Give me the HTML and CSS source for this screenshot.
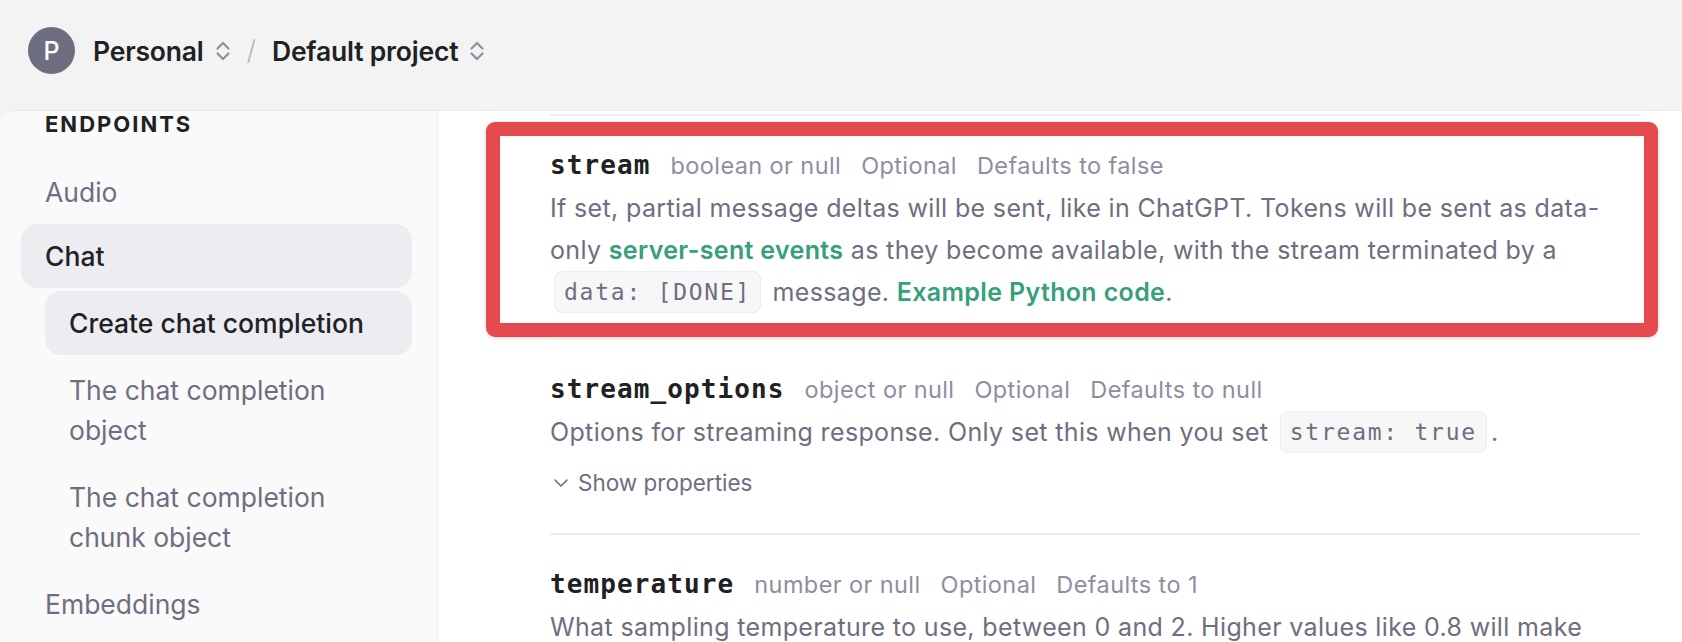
FILE: index.html
```html
<!DOCTYPE html>
<html lang="en">
<head>
<meta charset="utf-8">
<title>API Reference – Chat</title>
<link rel="stylesheet" href="styles.css">
</head>
<body>
<div class="app">
  <header class="topbar">
    <div class="avatar">P</div>
    <span class="crumb">Personal</span>
    <svg class="updown" viewBox="0 0 16 22" aria-hidden="true"><path d="M2.5 8.5 L8 3 L13.5 8.5 M2.5 13.5 L8 19 L13.5 13.5" fill="none" stroke="#8e8ea0" stroke-width="2.2" stroke-linecap="round" stroke-linejoin="round"/></svg>
    <span class="sep">/</span>
    <span class="crumb">Default project</span>
    <svg class="updown" viewBox="0 0 16 22" aria-hidden="true"><path d="M2.5 8.5 L8 3 L13.5 8.5 M2.5 13.5 L8 19 L13.5 13.5" fill="none" stroke="#8e8ea0" stroke-width="2.2" stroke-linecap="round" stroke-linejoin="round"/></svg>
  </header>
  <div class="panel">
    <aside class="sidebar">
      <div class="section-title">ENDPOINTS</div>
      <nav class="nav">
        <a class="nav-item nav-top">Audio</a>
        <a class="nav-item active">Chat</a>
        <div class="subnav">
          <a class="nav-item active">Create chat completion</a>
          <a class="nav-item">The chat completion object</a>
          <a class="nav-item">The chat completion chunk object</a>
        </div>
        <a class="nav-item">Embeddings</a>
      </nav>
    </aside>
    <main class="main">
      <section class="param">
        <div class="param-head">
          <span class="param-name">stream</span>
          <span class="param-meta">boolean or null</span>
          <span class="param-meta">Optional</span>
          <span class="param-meta">Defaults to false</span>
        </div>
        <p class="param-desc">If set, partial message deltas will be sent, like in ChatGPT. Tokens will be sent as data-only <a class="link">server-sent events</a> as they become available, with the stream terminated by a <code class="code">data: [DONE]</code> message. <a class="link">Example Python code</a>.</p>
        <div class="highlight"></div>
      </section>
      <section class="param">
        <div class="param-head">
          <span class="param-name">stream_options</span>
          <span class="param-meta">object or null</span>
          <span class="param-meta">Optional</span>
          <span class="param-meta">Defaults to null</span>
        </div>
        <p class="param-desc">Options for streaming response. Only set this when you set <code class="code">stream: true</code>.</p>
        <div class="show-props">
          <svg class="chev" viewBox="0 0 16 10" aria-hidden="true"><path d="M2 2 L8 8 L14 2" fill="none" stroke="#6e6e80" stroke-width="1.6" stroke-linecap="round" stroke-linejoin="round"/></svg>
          <span>Show properties</span>
        </div>
      </section>
      <section class="param">
        <div class="param-head">
          <span class="param-name">temperature</span>
          <span class="param-meta">number or null</span>
          <span class="param-meta">Optional</span>
          <span class="param-meta">Defaults to 1</span>
        </div>
        <p class="param-desc">What sampling temperature to use, between 0 and 2. Higher values like 0.8 will make the output more random, while lower values like 0.2 will make it more focused and deterministic.</p>
      </section>
    </main>
  </div>
</div>
</body>
</html>
```
FILE: styles.css
```css
* {
  box-sizing: border-box;
  margin: 0;
  padding: 0;
}

html,
body {
  height: 642px;
  overflow: hidden;
}

body {
  font-family: Inter, "Noto Sans", sans-serif;
  background: #f3f3f3;
  color: #202123;
}

.app {
  display: flex;
  flex-direction: column;
  height: 642px;
}

/* ---------- top bar ---------- */
.topbar {
  height: 110px;
  flex: none;
  display: flex;
  align-items: center;
  padding: 0 0 9px 28px;
}

.avatar {
  width: 47px;
  height: 47px;
  border-radius: 50%;
  background: #6e6e80;
  color: #fff;
  font-size: 25px;
  font-weight: 500;
  display: flex;
  align-items: center;
  justify-content: center;
  margin-right: 18px;
}

.crumb {
  font-size: 26.5px;
  font-weight: 600;
  color: #202123;
  letter-spacing: -0.2px;
}

.updown {
  width: 16px;
  height: 22px;
  margin-left: 11px;
}

.sep {
  margin: 0 16px 0 16px;
  color: #b4b4c2;
  font-size: 27px;
  font-weight: 300;
}

/* ---------- panel ---------- */
.panel {
  flex: 1;
  display: flex;
  background: #fff;
  border-top: 1px solid #ebebeb;
  border-top-left-radius: 16px;
  overflow: hidden;
}

.sidebar {
  width: 438px;
  flex: none;
  background: #fafafa;
  border-right: 1px solid #ececf1;
  padding: 0 25px 0 21px;
}

.section-title {
  font-size: 22px;
  font-weight: 700;
  letter-spacing: 2px;
  line-height: 26px;
  color: #202123;
  padding-left: 24px;
  margin-bottom: 23px;
}

.nav-item {
  display: block;
  font-size: 26.5px;
  line-height: 40px;
  padding: 12px 24px;
  border-radius: 16px;
  color: #6e6e80;
  margin-bottom: 3px;
}

.nav-item.nav-top {
  margin-bottom: 0;
}

.nav-item.active {
  background: #ececf1;
  color: #202123;
  font-weight: 500;
}

.subnav {
  margin-left: 24px;
}

/* ---------- main ---------- */
.main {
  flex: 1;
  padding: 3px 42px 0 112px;
}

.param {
  position: relative;
  border-top: 2px solid #ececf1;
  padding: 28px 0 25px;
}

.param-head {
  display: flex;
  align-items: baseline;
  gap: 20px;
  line-height: 42px;
}

.param-name {
  font-family: "DejaVu Sans Mono", "Liberation Mono", monospace;
  font-weight: 700;
  font-size: 26px;
  letter-spacing: 1.1px;
  color: #202123;
}

.param-meta {
  font-size: 23.5px;
  letter-spacing: 0.4px;
  color: #8e8ea0;
}

.param-desc {
  font-size: 25px;
  letter-spacing: 0.35px;
  line-height: 42px;
  color: #6e6e80;
  padding-right: 28px;
}

.link {
  color: #35a07a;
  font-weight: 600;
  text-decoration: none;
}

.code {
  display: inline-block;
  vertical-align: top;
  font-family: "DejaVu Sans Mono", "Liberation Mono", monospace;
  font-size: 23px;
  letter-spacing: 1.75px;
  line-height: 40px;
  padding: 0 9px;
  margin: 0 4px;
  background: #f7f7f8;
  border: 1px solid #ececf1;
  border-radius: 8px;
  color: #6e6e80;
}

.show-props {
  display: flex;
  align-items: center;
  gap: 9px;
  margin: 10px 0 5px;
  line-height: 40px;
  font-size: 22.5px;
  color: #6e6e80;
}

.chev {
  width: 16px;
  height: 10px;
  margin-left: 3px;
}

.highlight {
  position: absolute;
  top: 6px;
  left: -64px;
  right: -18px;
  bottom: 1px;
  border: 14px solid #e5484d;
  border-radius: 9px;
  box-shadow: 0 1px 4px rgba(0, 0, 0, 0.15);
  pointer-events: none;
}
```
